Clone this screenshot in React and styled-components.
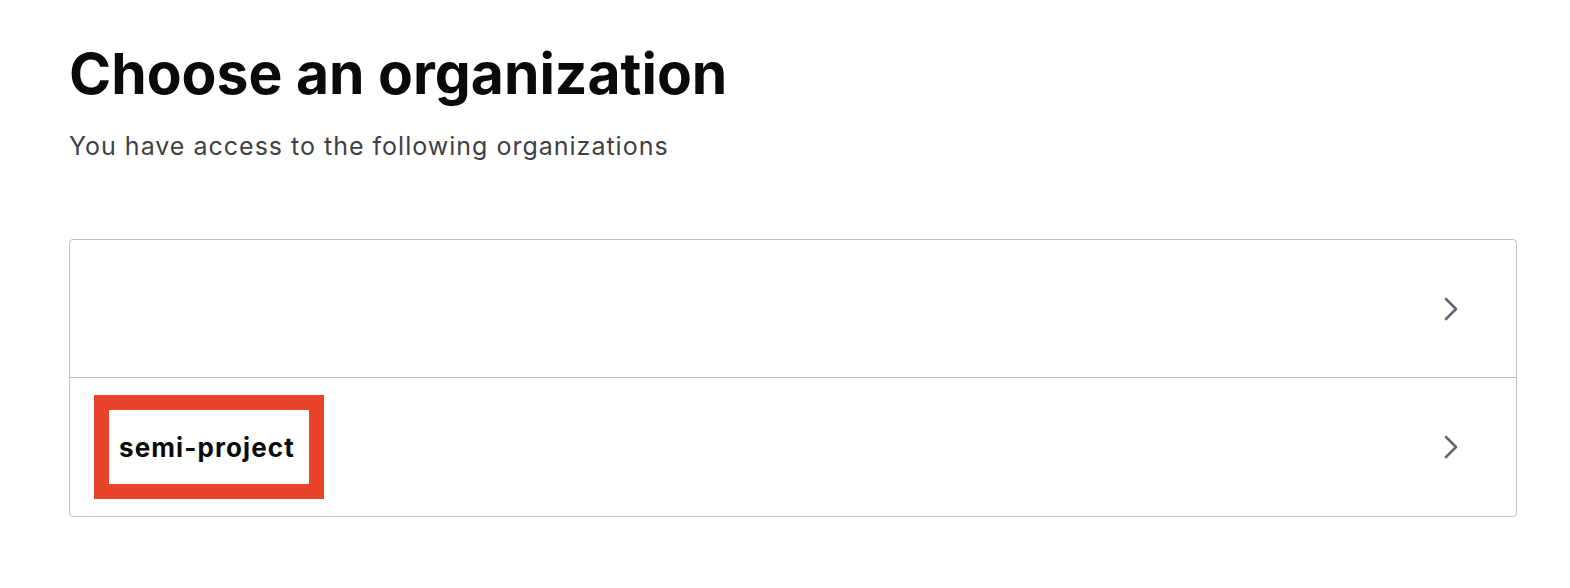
import React from 'react';
import styled, { createGlobalStyle } from 'styled-components';

const GlobalStyle = createGlobalStyle`
  html, body {
    margin: 0;
    padding: 0;
    background: #ffffff;
  }
  body {
    font-family: Inter, "Noto Sans", "Liberation Sans", sans-serif;
    color: #0a0a0a;
  }
`;

const Page = styled.div`
  padding: 40px 56px 0 69px;
  width: 1570px;
  box-sizing: border-box;
`;

const Title = styled.h1`
  margin: 0;
  font-size: 57px;
  font-weight: 700;
  line-height: 68px;
  letter-spacing: 0;
  color: #0a0a0a;
`;

const Subtitle = styled.p`
  margin: 22px 0 0;
  font-size: 25px;
  line-height: 32px;
  font-weight: 400;
  letter-spacing: 1px;
  color: #3f3f46;
`;

const OrgList = styled.div`
  margin-top: 77px;
  width: 1446px;
  border: 1px solid #c0c0c5;
  border-radius: 4px;
  display: flex;
  flex-direction: column;
`;

const OrgRow = styled.div`
  height: ${props => props.height}px;
  display: flex;
  align-items: center;
  justify-content: space-between;
  padding: 0 58px 0 24px;
  border-top: ${props => props.first ? 'none' : '1px solid #c0c0c5'};
  cursor: pointer;
`;

const Highlight = styled.div`
  border: 15px solid #e9432a;
  padding: 0 10px;
  width: 230px;
  height: 104px;
  box-sizing: border-box;
  display: flex;
  align-items: center;
`;

const OrgName = styled.span`
  font-size: 26px;
  font-weight: 700;
  color: #0a0a0a;
  letter-spacing: 1.1px;
`;

const Chevron = () => (
  <svg width="14" height="24" viewBox="0 0 14 24" fill="none">
    <path d="M2 2 L12 12 L2 22" stroke="#63666e" strokeWidth="2.6" strokeLinecap="round" strokeLinejoin="round" />
  </svg>
);

export default function App() {
  return (
    <>
      <GlobalStyle />
      <Page>
        <Title>Choose an organization</Title>
        <Subtitle>You have access to the following organizations</Subtitle>
        <OrgList>
          <OrgRow first height={137}>
            <span />
            <Chevron />
          </OrgRow>
          <OrgRow height={138}>
            <Highlight>
              <OrgName>semi-project</OrgName>
            </Highlight>
            <Chevron />
          </OrgRow>
        </OrgList>
      </Page>
    </>
  );
}
